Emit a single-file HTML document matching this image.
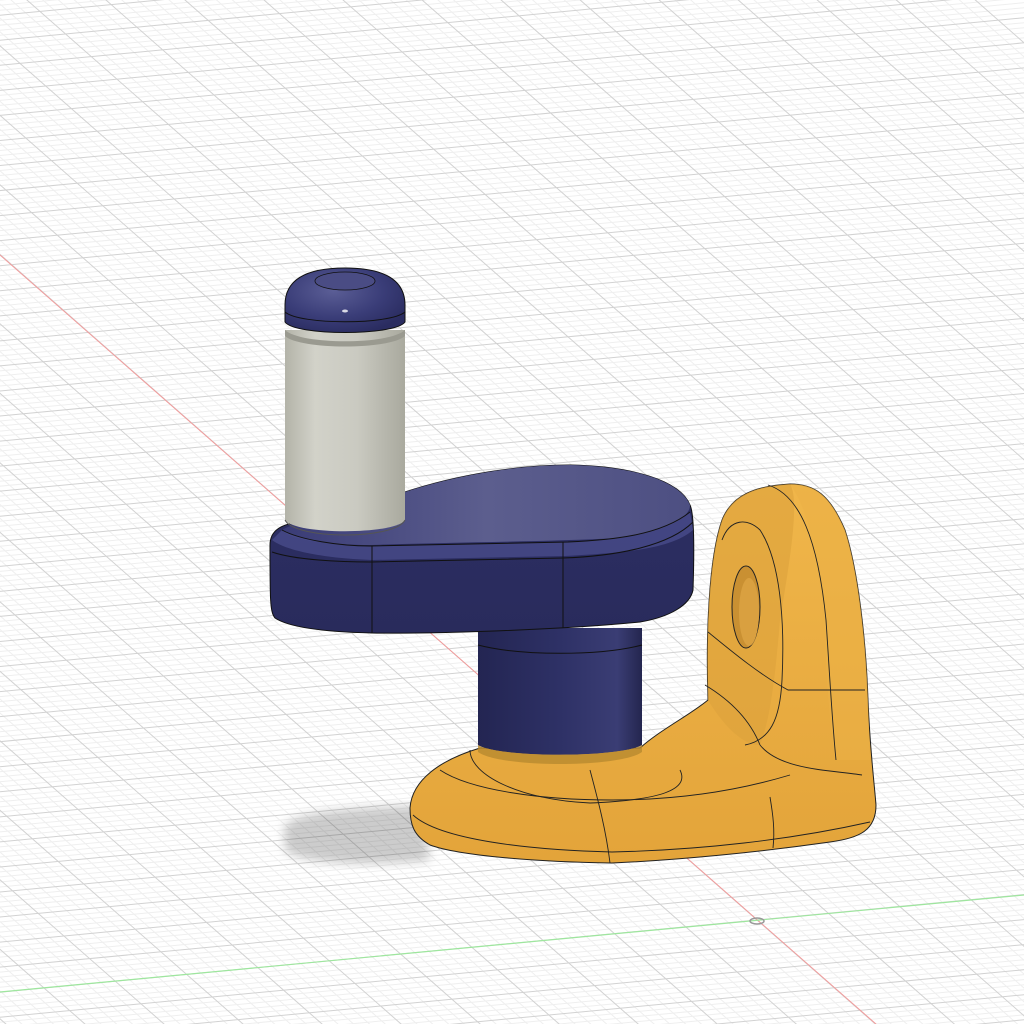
<!DOCTYPE html>
<html><head><meta charset="utf-8"><style>
html,body{margin:0;padding:0;background:#fff;overflow:hidden;width:1024px;height:1024px}
svg{display:block;overflow:hidden}
</style></head><body>
<svg id="s" width="1024" height="1024" viewBox="0 0 1024 1024" xmlns="http://www.w3.org/2000/svg">
<defs>
<clipPath id="clip"><rect x="0" y="0" width="1024" height="1024"/></clipPath>
<linearGradient id="pin" x1="0" x2="1" y1="0" y2="0">
<stop offset="0" stop-color="#b3b3a8"/><stop offset="0.25" stop-color="#d2d2c9"/><stop offset="0.6" stop-color="#cacac1"/><stop offset="1" stop-color="#a9a99e"/></linearGradient>
<linearGradient id="col" x1="0" x2="1">
<stop offset="0" stop-color="#232552"/><stop offset="0.5" stop-color="#2e3166"/><stop offset="0.85" stop-color="#3a3d74"/><stop offset="1" stop-color="#24264f"/></linearGradient>
<linearGradient id="armtop" x1="0" x2="1" y1="0" y2="0">
<stop offset="0" stop-color="#3a3c76"/><stop offset="0.5" stop-color="#5c5e8e"/><stop offset="1" stop-color="#4d4f82"/></linearGradient>
<linearGradient id="armside" x1="0" x2="0" y1="0" y2="1">
<stop offset="0" stop-color="#3d4080"/><stop offset="0.25" stop-color="#2c2e62"/><stop offset="1" stop-color="#292b5c"/></linearGradient>
<radialGradient id="cap" cx="0.4" cy="0.35" r="0.7">
<stop offset="0" stop-color="#5b5e96"/><stop offset="0.6" stop-color="#3a3d78"/><stop offset="1" stop-color="#2a2c60"/></radialGradient>
<linearGradient id="yel" x1="0" x2="0" y1="0" y2="1">
<stop offset="0" stop-color="#f0b64a"/><stop offset="1" stop-color="#e3a43a"/></linearGradient>
<filter id="blur"><feGaussianBlur stdDeviation="5"/></filter>
</defs>
<g id="grid" clip-path="url(#clip)"></g>
<!-- shadow -->
<path d="M285 835 C275 815 330 808 420 806 L430 860 C380 866 300 865 285 850 Z" fill="rgba(0,0,0,0.2)" filter="url(#blur)"/>
<!-- yellow base -->
<path d="M410 808 C412 780 440 760 480 748 L640 748 C660 730 690 715 708 700 C706 640 708 560 722 520 C732 495 755 486 790 484 C815 484 830 495 845 530 C858 570 866 640 868 700 C870 750 874 780 876 805 C876 830 860 838 830 842 C760 852 680 860 612 863 C540 862 460 856 430 845 C414 836 410 825 410 808 Z" fill="url(#yel)" stroke="#222" stroke-width="1"/>
<path d="M708 700 C706 640 708 560 722 520 C732 495 755 486 790 484 C800 500 790 560 780 620 C775 680 770 720 760 745 C740 745 720 720 708 700 Z" fill="#dca23c" opacity="0.6"/>
<path d="M790 484 C815 484 830 495 845 530 C858 570 866 640 868 700 L870 760 L835 760 C830 720 826 680 825 640 C820 570 812 515 790 484 Z" fill="#ebb046" opacity="0.6"/>
<ellipse cx="746" cy="607" rx="14" ry="41" fill="#c99032" stroke="#222" stroke-width="1"/>
<ellipse cx="749" cy="612" rx="10" ry="34" fill="#d9a040"/>
<g fill="none" stroke="#222" stroke-width="0.9">
<path d="M722 540 C730 518 748 518 760 530 C780 560 785 620 782 680 C780 720 770 740 745 745"/>
<path d="M768 485 C800 495 818 540 826 620 C830 680 832 720 836 760"/>
<path d="M708 632 C730 650 760 675 788 690 L865 690"/>
<path d="M705 685 C730 700 750 720 760 745"/>
<path d="M760 745 C780 770 830 770 862 775"/>
<path d="M413 815 C440 840 530 850 612 852 C700 850 790 840 870 822"/>
<path d="M440 770 C470 790 540 800 612 800 C680 800 740 790 790 775"/>
<path d="M470 750 C470 775 520 800 590 803 C660 800 690 790 680 770"/>
<path d="M590 770 C598 800 606 830 610 863"/>
<path d="M770 797 C773 815 775 830 773 848"/>
</g>
<!-- column -->
<path d="M478 628 L642 628 L642 745 C620 758 500 758 478 745 Z" fill="url(#col)"/>
<path d="M478 645 C520 656 600 656 642 645" fill="none" stroke="#111" stroke-width="1"/>
<path d="M478 745 C500 758 620 758 642 745 L642 752 C620 768 500 768 478 752 Z" fill="#b88a30" opacity="0.8"/>
<!-- arm -->
<path d="M270 545 C270 530 282 524 300 522 L405 492 C460 474 520 465 570 465 C630 466 680 480 690 505 C695 515 694 560 693 590 C690 605 670 617 640 622 C560 630 430 634 372 633 C330 632 290 628 275 618 C270 612 270 600 270 545 Z" fill="url(#armside)" stroke="#111" stroke-width="1"/>
<path d="M405 492 C460 474 520 465 570 465 C630 466 680 480 690 505 C690 520 660 532 620 538 C540 542 450 542 370 545 C330 545 290 540 282 530 C300 520 340 510 405 492 Z" fill="url(#armtop)"/>
<path d="M282 530 C300 540 340 546 370 546 L568 542 C610 540 660 536 690 512 L693 530 C670 550 620 553 565 556 L372 560 C320 558 285 550 272 540 Z" fill="#4d5090" opacity="0.7"/>
<g fill="none" stroke="#111" stroke-width="1">
<path d="M282 530 C300 540 340 546 370 546 L568 542 C610 540 660 536 690 512"/>
<path d="M272 552 C295 560 340 562 372 562 L563 558 C620 556 670 545 693 522"/>
<path d="M372 546 L372 633"/>
<path d="M563 542 L563 628"/>
</g>
<!-- pin -->
<path d="M285 330 L405 330 L405 520 C395 535 295 535 285 520 Z" fill="url(#pin)"/>
<path d="M285 520 C295 540 395 540 405 520" fill="none" stroke="#555" stroke-width="1"/>
<path d="M285 330 C300 345 390 345 405 330 L405 336 C390 350 300 350 285 336 Z" fill="#9a9a90"/>
<!-- cap -->
<path d="M285 305 C285 280 305 268 345 268 C385 268 405 280 405 305 L405 322 C395 336 295 336 285 322 Z" fill="url(#cap)" stroke="#111" stroke-width="1"/>
<ellipse cx="345" cy="281" rx="30" ry="9" fill="#4a4c84" stroke="#111" stroke-width="0.8"/>
<path d="M285 312 C300 325 390 325 405 312" fill="none" stroke="#111" stroke-width="1"/>
<ellipse cx="345" cy="311" rx="3" ry="1.5" fill="#fff" opacity="0.8"/>
</svg>
<script>
(function(){
var g=document.getElementById('grid'),out='';
var O=[757,920],A=[71.3/5,-6.8/5],B=[25.7/5,22.6/5];
var majors='';
for(var v=-230;v<=60;v++){var px=O[0]+v*B[0],py=O[1]+v*B[1];var L=150;
 var c=(v%5==0)?'#d2d2d2':'#efefef';
 var s='<line x1="'+(px-L*A[0]).toFixed(1)+'" y1="'+(py-L*A[1]).toFixed(1)+'" x2="'+(px+L*A[0]).toFixed(1)+'" y2="'+(py+L*A[1]).toFixed(1)+'" stroke="'+c+'" stroke-width="1"/>';
 if(v%5==0)majors+=s;else out+=s;}
for(var u=-120;u<=80;u++){var px=O[0]+u*A[0],py=O[1]+u*A[1];var L=300;
 var c=(u%5==0)?'#d2d2d2':'#efefef';
 var s='<line x1="'+(px-L*B[0]).toFixed(1)+'" y1="'+(py-L*B[1]).toFixed(1)+'" x2="'+(px+L*B[0]).toFixed(1)+'" y2="'+(py+L*B[1]).toFixed(1)+'" stroke="'+c+'" stroke-width="1"/>';
 if(u%5==0)majors+=s;else out+=s;}
out+=majors;
out+='<line x1="0" y1="255" x2="1024" y2="1154" stroke="#f29a9a" stroke-width="1"/>';
out+='<line x1="0" y1="992" x2="1024" y2="895" stroke="#9ee69e" stroke-width="1.2"/>';
out+='<ellipse cx="757" cy="921" rx="7" ry="3" fill="none" stroke="#999" stroke-width="1.5"/>';
g.innerHTML=out;
})();
</script>
</body></html>
